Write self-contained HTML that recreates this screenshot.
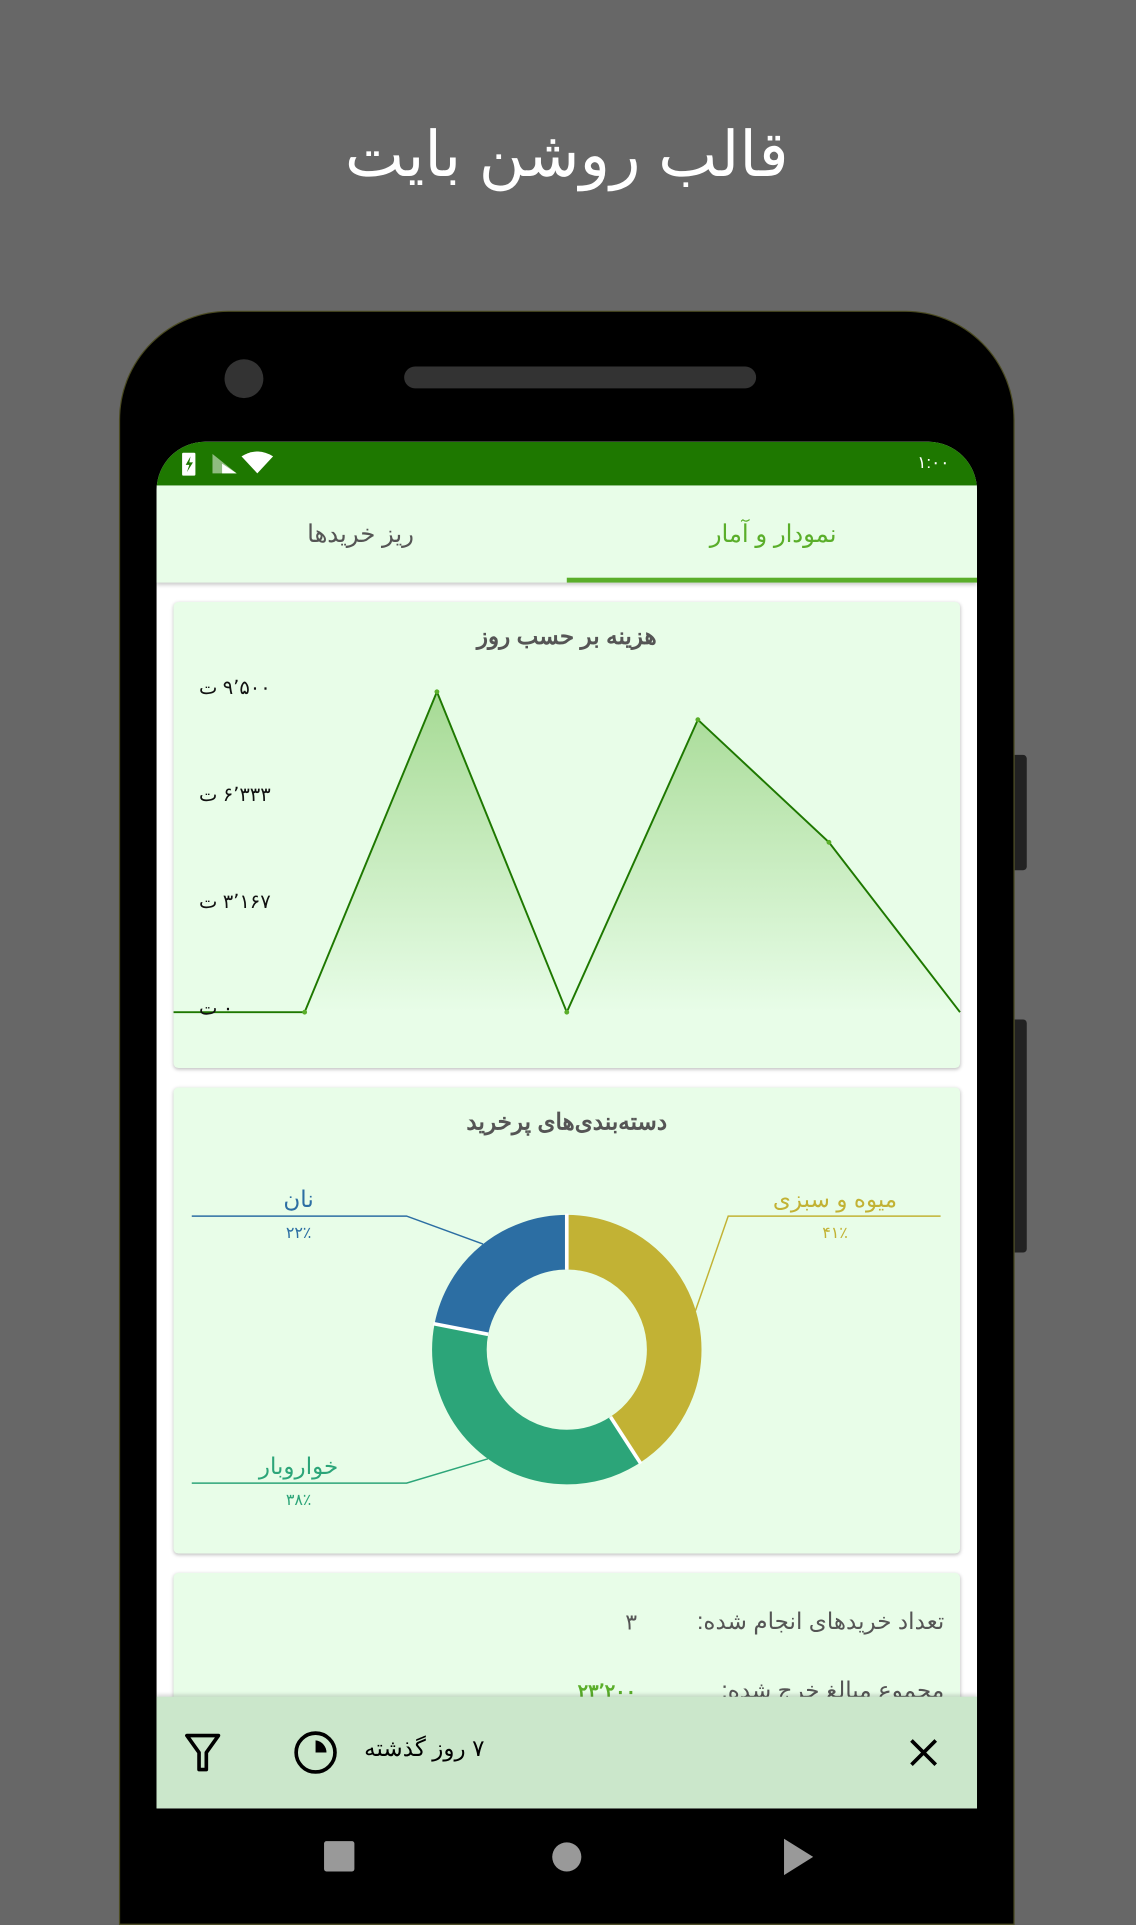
<!DOCTYPE html>
<html><head><meta charset="utf-8"><style>
html,body{margin:0;padding:0;width:1136px;height:1904px;overflow:hidden;background:#676767}
#w{position:absolute;left:0;top:0;width:936px;height:1568px;transform:scale(1.213675);transform-origin:0 0;font-family:"Liberation Sans","Noto Sans CJK SC",sans-serif}
.a{position:absolute}
.t{position:absolute;white-space:nowrap;transform:translate(-50%,-50%)}
.yl{position:absolute;left:164px;font-size:16px;color:#111;white-space:nowrap}
.yl span{display:inline-block}
</style></head><body><div id="w">
<div class="t" style="left:467px;top:128px;color:#fff;font-size:52px" dir="rtl">قالب روشن بایت</div>
<div class="a" style="left:836px;top:622px;width:10px;height:95px;background:#222;border-radius:0 3px 3px 0"></div>
<div class="a" style="left:836px;top:840px;width:10px;height:192px;background:#222;border-radius:0 3px 3px 0"></div>
<div class="a" style="left:98px;top:256px;width:738px;height:1330px;background:#000;border-radius:90px 90px 0 0;border:1px solid #4a4a20;box-sizing:border-box"></div>
<div class="a" style="left:185px;top:296px;width:32px;height:32px;border-radius:50%;background:#333"></div>
<div class="a" style="left:333px;top:302px;width:290px;height:18px;border-radius:9px;background:#333"></div>
<div class="a" style="left:129px;top:364px;width:676px;height:1126px;background:#fff;border-radius:40px 40px 0 0;overflow:hidden">
 <div class="a" style="left:0;top:0;width:676px;height:36px;background:#1e7800"></div>
 <svg class="a" style="left:21px;top:8px" width="12" height="20"><rect x="0" y="1" width="11" height="19" rx="1" fill="#fff"/><path d="M7 4 L3 11 H6 L4 17 L9 9 H6 Z" fill="#1e7800"/></svg>
 <svg class="a" style="left:46px;top:8px" width="60" height="20"><polygon points="0,18 0,2 20,18" fill="#fff" opacity=".5"/><polygon points="8,18 8,10 20,18" fill="#fff"/><path d="M24 4 Q37 -4 50 4 L37 18 Z" fill="#fff"/></svg>
 <div class="t" style="left:640px;top:17px;color:#fff;font-size:14px">۱:۰۰</div>
 <div class="a" style="left:0;top:36px;width:676px;height:80px;background:#e8fde8;box-shadow:0 2px 3px rgba(0,0,0,.2)"></div>
 <div class="a" style="left:338px;top:112px;width:338px;height:4px;background:#5aae2a"></div>
 <div class="t" style="left:508px;top:76px;color:#5aae2a;font-size:20px" dir="rtl">نمودار و آمار</div>
 <div class="t" style="left:168px;top:76px;color:#555;font-size:20px" dir="rtl">ریز خریدها</div>
</div>
<!-- card1 -->
<div class="a" style="left:143px;top:496px;width:648px;height:384px;background:#e8fde8;border-radius:4px;box-shadow:0 1px 3px rgba(0,0,0,.25)"></div>
<div class="t" style="left:467px;top:525px;color:#555;font-size:19px;font-weight:bold" dir="rtl">هزینه بر حسب روز</div>
<svg class="a" style="left:0;top:0" width="936" height="1568">
<defs><linearGradient id="g" x1="0" y1="570" x2="0" y2="834" gradientUnits="userSpaceOnUse"><stop offset="0" stop-color="#a6da94"/><stop offset="1" stop-color="#e8fde8"/></linearGradient></defs>
<polygon points="143,834 251,834 360,570 467,834 575,593 683,694 791,834" fill="url(#g)"/>
<polyline points="143,834 251,834 360,570 467,834 575,593 683,694 791,834" fill="none" stroke="#1e7800" stroke-width="1.6"/>
<g fill="#5aae2a"><circle cx="251" cy="834" r="2"/><circle cx="360" cy="570" r="2"/><circle cx="467" cy="834" r="2"/><circle cx="575" cy="593" r="2"/><circle cx="683" cy="694" r="2"/></g>
</svg>
<div class="yl" style="top:557px"><span>ت</span> <span>۹٬۵۰۰</span></div>
<div class="yl" style="top:645px"><span>ت</span> <span>۶٬۳۳۳</span></div>
<div class="yl" style="top:733px"><span>ت</span> <span>۳٬۱۶۷</span></div>
<div class="yl" style="top:821px"><span>ت</span> <span>۰</span></div>
<!-- card2 -->
<div class="a" style="left:143px;top:896px;width:648px;height:384px;background:#e8fde8;border-radius:4px;box-shadow:0 1px 3px rgba(0,0,0,.25)"></div>
<div class="t" style="left:467px;top:925px;color:#555;font-size:19px;font-weight:bold" dir="rtl">دسته‌بندی‌های پرخرید</div>
<svg class="a" style="left:0;top:0" width="936" height="1568">
<g transform="rotate(-90 467 1112)" fill="none" stroke-width="45">
<circle cx="467" cy="1112" r="88.5" stroke="#c2b234" stroke-dasharray="227.1 600"/>
<circle cx="467" cy="1112" r="88.5" stroke="#2ca579" stroke-dasharray="0 227.1 207 600"/>
<circle cx="467" cy="1112" r="88.5" stroke="#2c6ea3" stroke-dasharray="0 434.1 122 600"/>
</g>
<g stroke="#fff" stroke-width="3"><line x1="467" y1="1046" x2="467" y2="1000"/><line x1="503" y1="1167.4" x2="528" y2="1206"/><line x1="402.2" y1="1099.4" x2="357" y2="1090.6"/></g>
<polyline points="775,1002 600,1002 573,1080" fill="none" stroke="#c2b234" stroke-width="1.2"/>
<polyline points="158,1002 335,1002 398,1025" fill="none" stroke="#2c6ea3" stroke-width="1.2"/>
<polyline points="158,1222 335,1222 402,1202" fill="none" stroke="#2ca579" stroke-width="1.2"/>
</svg>
<div class="t" style="left:688px;top:989px;color:#c2b234;font-size:19px" dir="rtl">میوه و سبزی</div>
<div class="t" style="left:688px;top:1016px;color:#c2b234;font-size:13px">۴۱٪</div>
<div class="t" style="left:246px;top:989px;color:#2c6ea3;font-size:19px" dir="rtl">نان</div>
<div class="t" style="left:246px;top:1016px;color:#2c6ea3;font-size:13px">۲۲٪</div>
<div class="t" style="left:246px;top:1209px;color:#2ca579;font-size:19px" dir="rtl">خواروبار</div>
<div class="t" style="left:246px;top:1236px;color:#2ca579;font-size:13px">۳۸٪</div>
<!-- card3 -->
<div class="a" style="left:143px;top:1296px;width:648px;height:120px;background:#e8fde8;border-radius:4px;box-shadow:0 1px 3px rgba(0,0,0,.25)"></div>
<div class="a" style="right:158px;top:1325px;color:#555;font-size:19px;white-space:nowrap" dir="rtl">تعداد خریدهای انجام شده:</div>
<div class="t" style="left:520px;top:1337px;color:#555;font-size:18px">۳</div>
<div class="a" style="right:158px;top:1382px;color:#555;font-size:19px;white-space:nowrap" dir="rtl">مجموع مبالغ خرج شده:</div>
<div class="t" style="left:500px;top:1394px;color:#5aae2a;font-size:16px;font-weight:bold">۲۳٬۲۰۰</div>
<!-- bottom bar -->
<div class="a" style="left:129px;top:1398px;width:676px;height:92px;background:#cbe7cb;box-shadow:0 -2px 3px rgba(0,0,0,.15)"></div>
<svg class="a" style="left:150px;top:1426px" width="34" height="36"><path d="M4 4 H30 L20 18 V32 L14 32 V18 Z" fill="none" stroke="#000" stroke-width="3" stroke-linejoin="round"/></svg>
<svg class="a" style="left:240px;top:1424px" width="40" height="40"><circle cx="20" cy="20" r="16" fill="none" stroke="#000" stroke-width="3"/><path d="M20 10 A10 10 0 0 1 29 20 L20 20 Z" fill="#000"/></svg>
<div class="a" style="left:300px;top:1430px;color:#000;font-size:19px;white-space:nowrap" dir="rtl">۷ روز گذشته</div>
<svg class="a" style="left:748px;top:1431px" width="26" height="26"><path d="M3 3 L23 23 M23 3 L3 23" stroke="#000" stroke-width="3"/></svg>
<!-- nav -->
<div class="a" style="left:267px;top:1517px;width:25px;height:25px;background:#999;border-radius:2px"></div>
<div class="a" style="left:455px;top:1518px;width:24px;height:24px;background:#999;border-radius:50%"></div>
<svg class="a" style="left:645px;top:1514px" width="26" height="32"><polygon points="1,1 25,16 1,31" fill="#999"/></svg>
</div></body></html>
